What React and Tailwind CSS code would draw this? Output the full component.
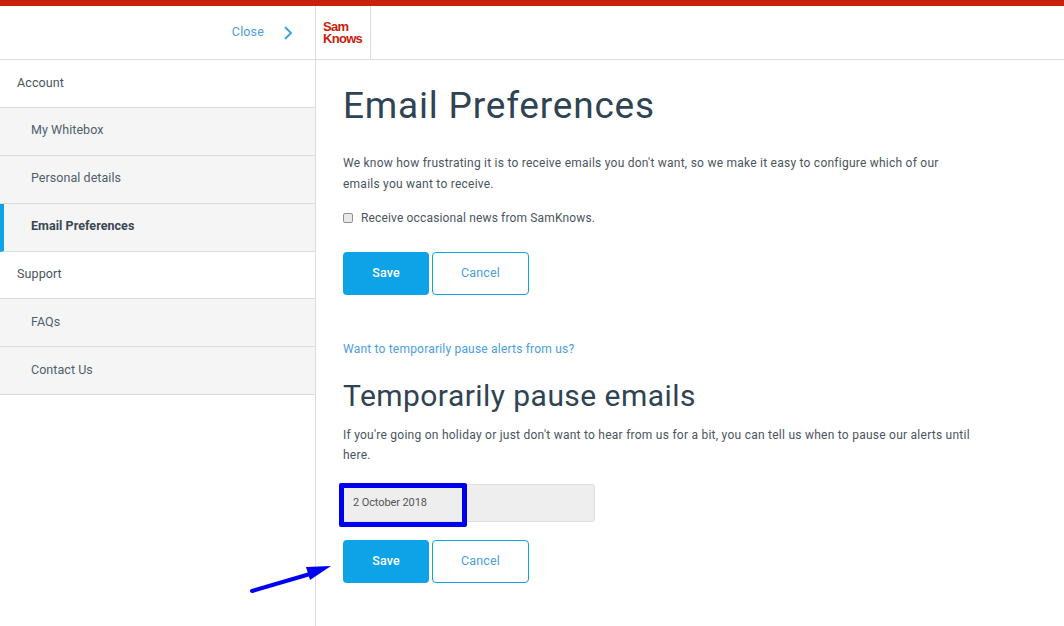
import React from "react";

const font = { fontFamily: '"Roboto", "Liberation Sans", sans-serif' };

function SideHead({ children, h = "h-[48px]", pb = "pb-0" }) {
  return (
    <div className={`${h} ${pb} border-b border-[#dcdcdc] bg-white pl-[17px] flex items-center text-[12.5px] tracking-[0.1px] text-[#4a5560]`}>
      {children}
    </div>
  );
}

function SideItem({ children, active, pb = "pb-[2px]" }) {
  return (
    <div
      className={`h-[48px] ${pb} border-b border-[#dcdcdc] bg-[#f5f5f5] flex items-center text-[12.5px] tracking-[0.05px] ${
        active ? "border-l-4 border-l-[#0ea2e6] pl-[27px] font-bold text-[#3a4652]" : "pl-[31px] text-[#4f5f6c]"
      }`}
    >
      {children}
    </div>
  );
}

function Buttons() {
  return (
    <div className="flex gap-[3px]">
      <button className="w-[86px] h-[43px] rounded-[4px] bg-[#0ea2e6] text-white text-[12.5px] font-medium tracking-[0.1px]">Save</button>
      <button className="w-[97px] h-[43px] rounded-[4px] border border-[#0ea2e6] bg-white text-[#4a9ee0] text-[12.5px] tracking-[0.15px]">Cancel</button>
    </div>
  );
}

export default function App() {
  return (
    <div className="w-[1064px] h-[626px] overflow-hidden bg-white flex flex-col relative" style={font}>
      <div className="h-[6px] bg-[#c9200a] shrink-0" />
      <header className="h-[54px] shrink-0 border-b border-[#dcdcdc] flex">
        <div className="w-[316px] border-r border-[#dcdcdc] flex items-center justify-end pr-[22px]">
          <span className="text-[12.5px] tracking-[0.15px] text-[#4a9ee0] mr-[19px] mb-[1px]">Close</span>
          <svg width="10" height="14" viewBox="0 0 10 14" fill="none" stroke="#2fa3e6" strokeWidth="1.8">
            <path d="M2 1l6 6-6 6" />
          </svg>
        </div>
        <div className="w-[55px] border-r border-[#dcdcdc] flex items-center pl-[7px]">
          <span className="block text-[#c9200a] text-[13px] font-bold leading-[11.5px] tracking-[-0.7px]" style={{ fontFamily: '"Liberation Sans", sans-serif' }}>
            Sam
            <br />
            Knows
          </span>
        </div>
      </header>
      <div className="flex-1 flex min-h-0">
        <aside className="w-[316px] shrink-0 border-r border-[#dcdcdc]">
          <SideHead>Account</SideHead>
          <SideItem>My Whitebox</SideItem>
          <SideItem>Personal details</SideItem>
          <SideItem active>Email Preferences</SideItem>
          <SideHead h="h-[47px]" pb="pb-[1px]">Support</SideHead>
          <SideItem pb="pb-0">FAQs</SideItem>
          <SideItem pb="pb-0">Contact Us</SideItem>
        </aside>
        <main className="flex-1 pl-[27px] pr-[90px] text-[#4a5560]">
          <h1 className="mt-[23px] text-[37px] leading-[46px] tracking-[0.8px] text-[#2f4352] font-normal">Email Preferences</h1>
          <p className="mt-[24px] text-[12px] leading-[21px] tracking-[0.24px] w-[625px]">
            We know how frustrating it is to receive emails you don't want, so we make it easy to configure which of our emails you want to receive.
          </p>
          <label className="mt-[12px] h-[21px] flex items-center text-[12px] tracking-[0.15px]">
            <input type="checkbox" className="appearance-none w-[10px] h-[10px] mr-[8px] rounded-[2px] border border-[#8f8f8f] bg-[#e9e9e9]" />
            Receive occasional news from SamKnows.
          </label>
          <div className="mt-[24px]">
            <Buttons />
          </div>
          <a className="block mt-[45px] text-[12px] leading-[18px] tracking-[0.2px] text-[#4a9ee0]">Want to temporarily pause alerts from us?</a>
          <h2 className="mt-[19px] text-[30px] leading-[38px] tracking-[0.45px] text-[#2f4352] font-normal">Temporarily pause emails</h2>
          <p className="mt-[10px] text-[12px] leading-[20px] tracking-[0.25px] w-[628px]">
            If you're going on holiday or just don't want to hear from us for a bit, you can tell us when to pause our alerts until here.
          </p>
          <div className="mt-[19px] w-[252px] h-[38px] rounded-[3px] border border-[#dde1e3] bg-[#eeeeee] flex items-center pl-[9px] text-[11px] tracking-[-0.1px] text-[#555]">
            2 October 2018
          </div>
          <div className="mt-[18px]">
            <Buttons />
          </div>
        </main>
      </div>
      <div className="absolute left-[339px] top-[483px] w-[128px] h-[44px] rounded-[2px] border-[5px] border-[#0000f0]" />
      <svg className="absolute left-[248px] top-[562px]" width="88" height="34" viewBox="0 0 88 34">
        <path d="M4 29L62 12" stroke="#0000f0" strokeWidth="4" strokeLinecap="round" />
        <path d="M83 4L58 5L62 18Z" fill="#0000f0" />
      </svg>
    </div>
  );
}
